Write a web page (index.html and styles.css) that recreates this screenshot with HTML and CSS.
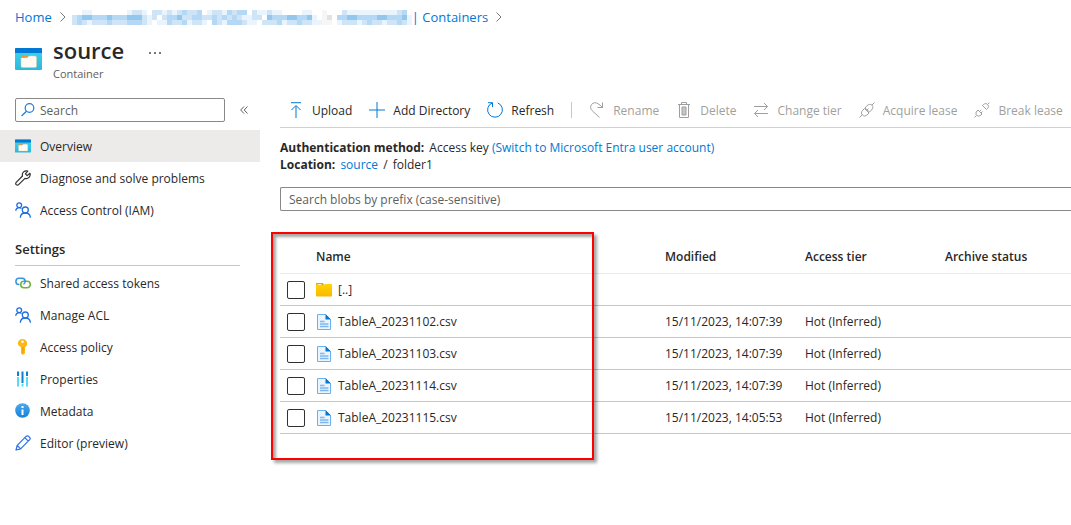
FILE: index.html
```
<!DOCTYPE html>
<html lang="en">

<head>
    <meta charset="UTF-8">
    <meta name="viewport" content="width=device-width, initial-scale=1.0">
    <title>source - Container</title>
    <link rel="stylesheet" href="styles.css">
</head>

<body>
    <!-- Shared icons -->
    <svg class="icon-defs" aria-hidden="true">
        <defs>
            <linearGradient id="cyan" x1="0" y1="0" x2="0" y2="1">
                <stop offset="0" stop-color="#3fd5f2" />
                <stop offset="1" stop-color="#2bb8dc" />
            </linearGradient>
            <linearGradient id="gold" x1="0" y1="0" x2="0" y2="1">
                <stop offset="0" stop-color="#ffd400" />
                <stop offset="1" stop-color="#fbb800" />
            </linearGradient>
            <linearGradient id="info" x1="0" y1="0" x2="0" y2="1">
                <stop offset="0" stop-color="#4aa8ee" />
                <stop offset="1" stop-color="#1583d8" />
            </linearGradient>
        </defs>
        <symbol id="container" viewBox="0 0 27 22">
            <rect width="27" height="22" rx="1" fill="url(#cyan)" />
            <path d="M0 5V1q0-1 1-1h25q1 0 1 1v4z" fill="#0078d4" />
            <path d="M6 9.500h6.500L14 8h6q1.500 0 1.500 1.500v8.500q0 1.500-1.500 1.500H7.500Q6 19.500 6 18z" fill="#fffaf2" stroke="#e8c9a0" stroke-width=".5" />
            <path d="M6 10V8.500Q6 7 7.500 7H12l1 1-1 1.500z" fill="#f7923a" />
        </symbol>
        <symbol id="people" viewBox="0 0 16 16">
            <g fill="none" stroke="#1f6fe0" stroke-width="1.300">
                <circle cx="4.200" cy="3.200" r="2.400" />
                <path d="M.7 8.800c.2-1.900 1.600-3.200 3.400-3.200 1 0 1.800.3 2.400.9" />
                <circle cx="10.300" cy="8" r="3" />
                <path d="M5.300 15.800c.2-2.900 2.300-4.800 5-4.800s4.900 1.900 5.100 4.800" />
            </g>
        </symbol>
        <symbol id="file" viewBox="0 0 16 18">
            <path d="M1.500 1.500h8l5 5v10h-13z" fill="#eaf5ff" stroke="#69b0ee" />
            <path d="M9.500 1l5.500 5.500H9.500z" fill="#0078d4" />
            <path d="M4 8.500h4.500M4 11h8.500M4 13.500h8.500" stroke="#7fb6ef" stroke-width="1.400" />
        </symbol>
    </svg>

    <nav class="breadcrumb" aria-label="Breadcrumb">
        <a href="#">Home</a>
        <svg class="chevron" viewBox="0 0 6 10"><path d="M.5.5L5 5 .5 9.500" /></svg>
        <a href="#" class="account">
            <svg class="redacted" viewBox="0 0 68 3" role="img" aria-label="Redacted">
                <path stroke="#eaf4fc" d="M2 .5h2M11 .5h4M16 .5h10M27 .5h8M36 .5h6M46 .5h2M50 .5h1M54 .5h13M0 1.500h49M50 1.500h2M53 1.500h15M0 2.500h16M17 2.500h10M27 2.500h23M51 2.500h1M53 2.500h15" />
                <path stroke="#cfe5f7" d="M12 .5h2M16 .5h2M19 .5h1M21 .5h5M28 .5h2M31 .5h4M36 .5h1M39 .5h1M54 .5h1M65 .5h2M0 1.500h15M16 1.500h1M18 1.500h16M36 1.500h12M53 1.500h14M0 2.500h3M4 2.500h3M8 2.500h7M19 2.500h4M24 2.500h2M28 2.500h2M31 2.500h4M38 2.500h4M43 2.500h5M54 2.500h3M58 2.500h4M63 2.500h4" />
                <path stroke="#b5d8f4" d="M22 .5h1M25 .5h1M31 .5h1M33 .5h2M66 .5h1M1 1.500h13M19 1.500h3M24 1.500h2M28 1.500h1M30 1.500h1M32 1.500h1M39 1.500h9M53 1.500h14M1 2.500h1M7 2.500h1M11 2.500h3M19 2.500h1M22 2.500h1M28 2.500h1M31 2.500h3M41 2.500h1M45 2.500h1M59 2.500h1M65 2.500h1" />
                <path stroke="#94c7ee" d="M2 1.500h2M7 1.500h1M11 1.500h3M21 1.500h1M39 1.500h1M43 1.500h2M47 1.500h1M55 1.500h2M61 1.500h2M66 1.500h1" />
                <path stroke="#fff" d="M17 1.500h1M38 1.500h1M27 2.500h1M37 2.500h1" />
                <path stroke="#f6f6f6" d="M50 .5h1M50 1.500h1M50 2.500h2" />
                <path stroke="#e3e3e3" d="M51 1.500h1" />
            </svg>
            <span>| Containers</span>
        </a>
        <svg class="chevron" viewBox="0 0 6 10"><path d="M.5.5L5 5 .5 9.500" /></svg>
    </nav>

    <header class="page-header">
        <svg class="page-icon"><use href="#container" /></svg>
        <div>
            <h1>source</h1>
            <p>Container</p>
        </div>
        <button class="more" aria-label="More">
            <svg viewBox="0 0 12 2"><path d="M0 0h2v2H0zM5 0h2v2H5zM10 0h2v2h-2z" /></svg>
        </button>
    </header>

    <div class="layout">
        <aside class="sidebar">
            <div class="sidebar-search">
                <label class="search-box">
                    <svg class="icon" viewBox="0 0 16 16"><g fill="none" stroke="#1b7fd6" stroke-width="1.200"><circle cx="9.500" cy="6" r="4.300" /><path d="M6.500 9.200L1.500 14" /></g></svg>
                    <input type="text" placeholder="Search" aria-label="Search">
                </label>
                <button class="collapse" aria-label="Collapse menu">
                    <svg viewBox="0 0 8 8"><path d="M4 .5L.7 4 4 7.500M7.500.5L4.200 4l3.300 3.500" /></svg>
                </button>
            </div>
            <nav class="menu">
                <a href="#" class="active">
                    <svg class="icon"><use href="#container" /></svg>Overview
                </a>
                <a href="#">
                    <svg class="icon" viewBox="0 0 16 16"><path d="M12.800 1.100a4 4 0 0 0-5.300 4.900L1.200 12.300a1.600 1.600 0 0 0 2.400 2.400l6.400-6.300a4 4 0 0 0 4.900-5.200l-2.700 2.400-1.800-1.800z" fill="none" stroke="#323130" stroke-width="1.200" stroke-linejoin="round" /></svg>Diagnose and solve problems
                </a>
                <a href="#">
                    <svg class="icon"><use href="#people" /></svg>Access Control (IAM)
                </a>
            </nav>
            <h2>Settings</h2>
            <nav class="menu">
                <a href="#">
                    <svg class="icon" viewBox="0 0 16 16"><g fill="none" stroke-width="1.500"><rect x="5.700" y="6.300" width="9.600" height="6.400" rx="3.200" stroke="#76b043" /><path d="M4.500 9.500H4a3.100 3.100 0 0 1 0-6.200h3.200a3.100 3.100 0 0 1 3 3.100 3 3 0 0 1-1.700 2.900" stroke="#3b94e0" /></g></svg>Shared access tokens
                </a>
                <a href="#">
                    <svg class="icon"><use href="#people" /></svg>Manage ACL
                </a>
                <a href="#">
                    <svg class="icon" viewBox="0 0 16 16"><path d="M7.500 0a4.700 4.700 0 0 1 4.700 4.600c0 1.600-.9 2.800-2.200 3.600v6L7.800 16 6 14.500V8.200C4.200 7.200 2.800 6.200 2.800 4.600A4.700 4.700 0 0 1 7.500 0z" fill="#fdb913" /><circle cx="7.500" cy="2.700" r="1.300" fill="#fff" /><path d="M8 8v6" stroke="#e89a00" /></svg>Access policy
                </a>
                <a href="#">
                    <svg class="icon" viewBox="0 0 16 16"><path d="M2 6h2v9.500H2zM6.500 13h2v2.500h-2zM11 6h2v9.500h-2z" fill="#4fe0f5" /><path d="M2 .5h2V5H2zM6.500.5h2V12h-2zM11 .5h2V5h-2z" fill="#0f7fd4" /></svg>Properties
                </a>
                <a href="#">
                    <svg class="icon" viewBox="0 0 16 16"><circle cx="7.500" cy="7.500" r="7.300" fill="url(#info)" /><path d="M6.500 6.500h2V12h-2zM6.500 3h2v2h-2z" fill="#fff" /></svg>Metadata
                </a>
                <a href="#">
                    <svg class="icon" viewBox="0 0 16 16"><path d="M1 15l1.200-4.700L11.300 1.200q1.100-.9 2.300.1l1.100 1.100q1 1.200 0 2.300L5.600 13.800zM9.800 2.700l3.500 3.500M2.200 10.300l3.400 3.500" fill="none" stroke="#2b6fe0" stroke-width="1.200" stroke-linejoin="round" /></svg>Editor (preview)
                </a>
            </nav>
        </aside>

        <main class="content">
            <div class="toolbar">
                <button>
                    <svg class="icon blue" viewBox="0 0 16 16"><path d="M3 .7h10M8 16V4M3.500 8L8 3.500 12.500 8" /></svg>Upload
                </button>
                <button>
                    <svg class="icon blue" viewBox="0 0 16 16"><path d="M8 0v16M0 8h16" /></svg>Add Directory
                </button>
                <button>
                    <svg class="icon blue" viewBox="0 0 16 16"><path d="M1 .7h4.500v4.500M5.300.9A7.400 7.400 0 1 0 10.700.9" /></svg>Refresh
                </button>
                <span class="divider"></span>
                <button disabled>
                    <svg class="icon" viewBox="0 0 16 16"><path d="M10.500 15.500L3.200 8.700A4.500 4.500 0 0 1 9 1.800q2.200 1 4.500 3.700M13.500.5v5h-5" /></svg>Rename
                </button>
                <button disabled>
                    <svg class="icon" viewBox="0 0 16 16"><path d="M2 2.500h12M5.500 2.500v-2h5v2M3.500 2.500v13h9v-13" /><path d="M6 5h4v8H6z" fill="#c8c6c4" /></svg>Delete
                </button>
                <button disabled>
                    <svg class="icon" viewBox="0 0 16 16"><path d="M1 4.500h13.500M11 1l3.500 3.500L11 8M15 11.500H1.500M5 8l-3.500 3.500L5 15" /></svg>Change tier
                </button>
                <button disabled>
                    <svg class="icon" viewBox="0 0 16 16"><path d="M.5 15.500L3 13M13 3l2.500-2.500M3.500 8.500l2-2 4.500 4.500-2 2c-1.500 1.300-3.300 1.300-4.600 0s-1.300-3 .1-4.500zM6 6l2-2.300c1.500-1.500 3.600-1.800 5-.5s1 3.300-.5 4.800l-2 2zM7.500 8.500l1.800-1.800" /></svg>Acquire lease
                </button>
                <button disabled>
                    <svg class="icon" viewBox="0 0 16 16"><path d="M.5 15.500l2-2M13.500 2.500l2-2M3 9l1-1 4 4-1 1c-1.500 1.300-3 1.400-4.200.3S1.700 10.500 3 9zM5.500 9.500l1.700-1.700M7 11l1.500-1.500M8.500 3.500l1-1c1.500-1.200 3-1.200 4.100 0s1.100 2.500-.1 4l-1 1z" /></svg>Break lease
                </button>
            </div>

            <div class="details">
                <p><strong>Authentication method:</strong> Access key <a href="#">(Switch to Microsoft Entra user account)</a></p>
                <p><strong>Location:</strong> <a href="#">source</a> <span class="slash">/</span> folder1</p>
            </div>

            <input class="blob-search" type="text" placeholder="Search blobs by prefix (case-sensitive)" aria-label="Search blobs by prefix">

            <div class="blobs">
                <table>
                    <thead>
                        <tr>
                            <th class="check-col"></th>
                            <th>Name</th>
                            <th class="date-col">Modified</th>
                            <th class="tier-col">Access tier</th>
                            <th class="status-col">Archive status</th>
                        </tr>
                    </thead>
                    <tbody>
                        <tr>
                            <td><input type="checkbox" aria-label="Select parent folder"></td>
                            <td>
                                <a href="#" class="name">
                                    <svg viewBox="0 0 16 18"><path d="M0 3q0-1 1-1h6l1 2H0z" fill="#dfa500" /><path d="M0 4h8l1-1h6q1 0 1 1v10.500q0 1-1 1H1q-1 0-1-1z" fill="url(#gold)" /><path d="M1.500 3.500h4" stroke="#fff2b0" /></svg>[..]
                                </a>
                            </td>
                            <td></td>
                            <td></td>
                            <td></td>
                        </tr>
                        <tr>
                            <td><input type="checkbox" aria-label="Select TableA_20231102.csv"></td>
                            <td><a href="#" class="name"><svg><use href="#file" /></svg>TableA_20231102.csv</a></td>
                            <td>15/11/2023, 14:07:39</td>
                            <td>Hot (Inferred)</td>
                            <td></td>
                        </tr>
                        <tr>
                            <td><input type="checkbox" aria-label="Select TableA_20231103.csv"></td>
                            <td><a href="#" class="name"><svg><use href="#file" /></svg>TableA_20231103.csv</a></td>
                            <td>15/11/2023, 14:07:39</td>
                            <td>Hot (Inferred)</td>
                            <td></td>
                        </tr>
                        <tr>
                            <td><input type="checkbox" aria-label="Select TableA_20231114.csv"></td>
                            <td><a href="#" class="name"><svg><use href="#file" /></svg>TableA_20231114.csv</a></td>
                            <td>15/11/2023, 14:07:39</td>
                            <td>Hot (Inferred)</td>
                            <td></td>
                        </tr>
                        <tr>
                            <td><input type="checkbox" aria-label="Select TableA_20231115.csv"></td>
                            <td><a href="#" class="name"><svg><use href="#file" /></svg>TableA_20231115.csv</a></td>
                            <td>15/11/2023, 14:05:53</td>
                            <td>Hot (Inferred)</td>
                            <td></td>
                        </tr>
                    </tbody>
                </table>
                <div class="highlight"></div>
            </div>
        </main>
    </div>
</body>

</html>
```
FILE: styles.css
```
* {
    box-sizing: border-box;
}

body {
    margin: 0;
    font-family: "Open Sans", "Noto Sans", sans-serif;
    font-size: 12px;
    line-height: 17px;
    color: #292827;
    background-color: #fff;
}

h1,
h2,
p {
    margin: 0;
}

a {
    color: #0078d4;
    text-decoration: none;
}

button {
    padding: 0;
    border: none;
    background: none;
    font: inherit;
    color: inherit;
    cursor: pointer;
}

input {
    font: inherit;
    color: inherit;
}

input::placeholder {
    color: #605e5c;
    opacity: 1;
}

.icon-defs {
    position: absolute;
    width: 0;
    height: 0;
}

.icon {
    width: 16px;
    height: 16px;
    flex: none;
}

/* Breadcrumb */
.breadcrumb {
    display: flex;
    align-items: center;
    gap: 6px;
    height: 34px;
    padding-left: 15px;
    font-size: 13px;
}

.account {
    display: flex;
    align-items: center;
}

.redacted {
    width: 340px;
    height: 15px;
    fill: none;
    stroke-width: 1;
    shape-rendering: crispEdges;
}

.chevron {
    width: 6px;
    height: 10px;
    margin-left: 2px;
    fill: none;
    stroke: #7a7876;
}

/* Title */
.page-header {
    display: flex;
    align-items: flex-start;
    height: 64px;
    padding: 2px 15px 0;
}

.page-icon {
    width: 27px;
    height: 22px;
    margin: 12px 11px 0 0;
}

.page-header h1 {
    font-size: 22px;
    line-height: 28px;
    font-weight: 600;
}

.page-header p {
    margin-top: 2px;
    font-size: 11px;
    line-height: 16px;
    color: #605e5c;
}

.more {
    margin: 14px 0 0 25px;
    line-height: 0;
}

.more svg {
    width: 12px;
    height: 2px;
    fill: #7a7876;
}

.layout {
    display: flex;
    align-items: flex-start;
}

/* Sidebar */
.sidebar {
    width: 260px;
    flex: none;
}

.sidebar-search {
    display: flex;
    align-items: center;
    gap: 15px;
    padding-left: 15px;
    margin-bottom: 8px;
}

.search-box {
    display: flex;
    align-items: center;
    width: 210px;
    height: 24px;
    padding-left: 4px;
    gap: 4px;
    border: 1px solid #8a8886;
    border-radius: 2px;
}

.search-box input {
    width: 100%;
    padding: 0;
    border: none;
    outline: none;
    background: none;
}

.collapse {
    line-height: 0;
}

.collapse svg {
    width: 8px;
    height: 8px;
    fill: none;
    stroke: #605e5c;
}

.menu a {
    display: flex;
    align-items: center;
    gap: 9px;
    height: 32px;
    padding-left: 15px;
    color: #292827;
}

.menu a.active {
    background-color: #edebe9;
}

.sidebar h2 {
    margin: 15px 20px 1px 15px;
    padding-bottom: 7px;
    border-bottom: 1px solid #c8c6c4;
    font-size: 13px;
    line-height: 17px;
    font-weight: 600;
}

/* Main area */
.content {
    flex: 1;
    min-width: 0;
    padding-left: 20px;
}

.toolbar {
    display: flex;
    align-items: center;
    gap: 17px;
    height: 30px;
    padding: 0 0 5px 8px;
    border-bottom: 1px solid #d2d0ce;
}

.toolbar button {
    display: flex;
    align-items: center;
    gap: 8px;
    white-space: nowrap;
}

.toolbar button:disabled {
    color: #a19f9d;
    cursor: default;
}

.toolbar .icon {
    fill: none;
    stroke: #a19f9d;
}

.toolbar .icon.blue {
    stroke: #0078d4;
}

.divider {
    width: 1px;
    height: 16px;
    flex: none;
    background-color: #c8c6c4;
}

.details {
    padding: 11px 0 14px;
}

.details strong {
    margin-right: 2px;
}

.slash {
    margin: 0 2px;
}

.blob-search {
    display: block;
    width: 100%;
    height: 24px;
    padding: 0 8px;
    border: 1px solid #8a8886;
    border-right: none;
    border-radius: 2px 0 0 2px;
}

/* Blob list */
.blobs {
    position: relative;
    padding: 29px 0 40px;
}

table {
    width: 100%;
    table-layout: fixed;
    border-collapse: separate;
    border-spacing: 0;
}

th,
td {
    height: 32px;
    padding: 0;
    border-bottom: 1px solid #c8c6c4;
    text-align: left;
    white-space: nowrap;
}

th {
    height: 34px;
    border-bottom-color: #edebe9;
    font-weight: 600;
}

.check-col {
    width: 36px;
}

.date-col,
.tier-col {
    width: 140px;
}

.status-col {
    width: 126px;
}

td input[type="checkbox"] {
    appearance: none;
    display: block;
    width: 18px;
    height: 18px;
    margin: 0 0 0 7px;
    border: 1px solid #323130;
    border-radius: 2px;
}

.name {
    display: flex;
    align-items: center;
    gap: 6px;
    color: #292827;
}

.name svg {
    width: 16px;
    height: 18px;
}

.highlight {
    position: absolute;
    top: 21px;
    left: -9px;
    width: 323px;
    height: 228px;
    border: 2px solid #fe0000;
    box-shadow: 3px 3px 3px rgba(0, 0, 0, 0.35), inset 3px 3px 3px rgba(0, 0, 0, 0.35);
    pointer-events: none;
}
```
